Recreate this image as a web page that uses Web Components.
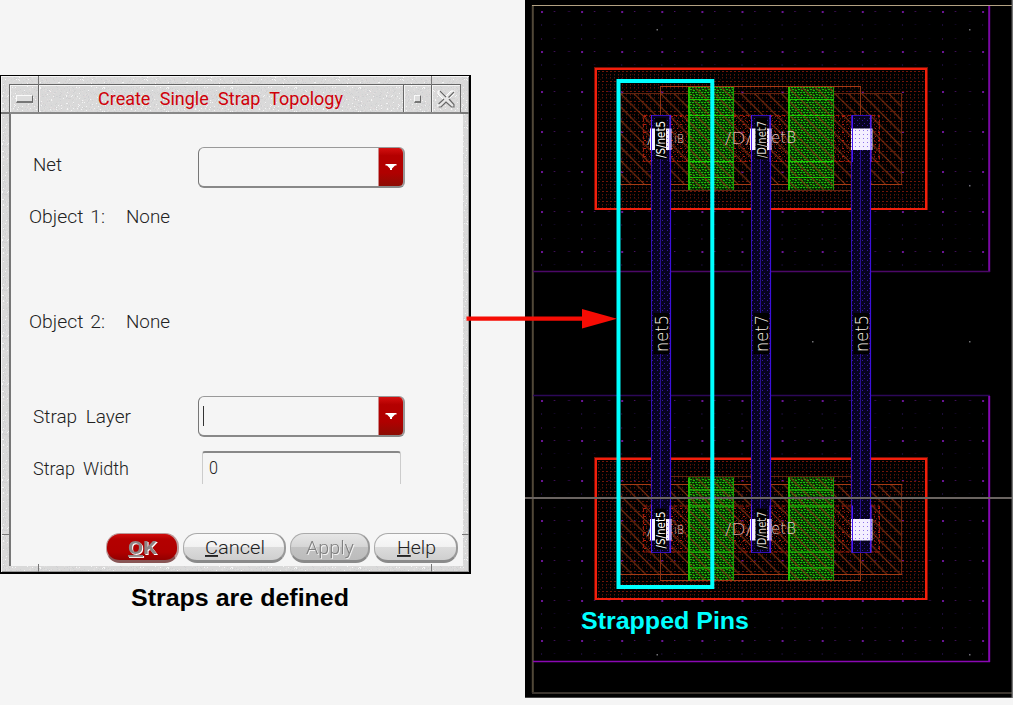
<!DOCTYPE html>
<html lang="en">
<head>
<meta charset="utf-8">
<title>Create Single Strap Topology</title>
<style>
html,body{margin:0;background:#f5f5f5;width:1013px;height:705px;overflow:hidden;font-family:Roboto,"Liberation Sans",sans-serif;color:#222}
</style>
</head>
<body>
<strap-page></strap-page>
<script>
const define = (name, cls) => customElements.define(name, cls);
class Base extends HTMLElement {
  connectedCallback() {
    if (this.shadowRoot) return;
    const t = document.createElement('template');
    t.innerHTML = this.render();
    this.attachShadow({mode: 'open'}).append(t.content.cloneNode(true));
  }
}

/* Speckled grain used by the window frame */
let seed = 7;
const rnd = () => (seed = (seed * 16807) % 2147483647) / 2147483647;
let cells = '';
for (let i = 0; i < 900; i++) {
  const c = ['#f4f4f4', '#cfcfd3', '#e2dede', '#d0d0d0', '#dcd6d7', '#d2d2d2', '#dedede'][Math.floor(rnd() * 7)];
  cells += `<rect x="${Math.floor(rnd() * 64)}" y="${Math.floor(rnd() * 48)}" width="1" height="1" fill="${c}"/>`;
}
const grain = `<svg xmlns="http://www.w3.org/2000/svg" width="64" height="48" shape-rendering="crispEdges"><rect width="64" height="48" fill="#d9d9d9"/>${cells}</svg>`;
document.documentElement.style.setProperty('--grain', `url("data:image/svg+xml,${encodeURIComponent(grain)}")`);

/* One line of text set to a fixed width; "u" underlines the first letter */
define('fit-text', class extends Base {
  render() {
    const a = (n, d) => this.getAttribute(n) || d;
    const s = a('text', ''), w = a('w'), size = a('size', 19);
    const body = this.hasAttribute('u') ? `<tspan text-decoration="underline">${s[0]}</tspan>${s.slice(1)}` : s;
    return `<style>:host{display:block;flex:none}svg{display:block;overflow:visible}text{white-space:pre;word-spacing:${a('ws', 0)}px}</style>
    <svg width="${w}" height="26"><text x="0" y="19" font-size="${size}" font-weight="${a('weight', 300)}" fill="currentColor" textLength="${w}" lengthAdjust="spacingAndGlyphs">${body}</text></svg>`;
  }
});

define('combo-box', class extends Base {
  render() {
    return `<style>
    :host{display:flex;box-sizing:border-box;width:207px;height:41px;border:1.5px solid #777;border-top-color:#999;border-right:2px solid #999;border-bottom:2px solid #888;border-radius:6px;overflow:hidden;align-items:stretch}
    .f{flex:1;display:flex;align-items:center;padding-left:4px}
    .c{width:1px;height:20px;background:#333}
    .b{width:24px;background:linear-gradient(#d41010,#b40000 20%,#b00000 65%,#8c0c04);display:flex;align-items:center;justify-content:center;border-left:1px solid #c88}
    </style><div class="f">${this.hasAttribute('caret') ? '<div class="c"></div>' : ''}</div>
    <div class="b"><svg width="12" height="8"><path d="M.5 1h11v1.500h-1.500L7 5.500V7H5V5.500L2 2.500H.5z" fill="#fff"/></svg></div>`;
  }
});

define('line-field', class extends Base {
  render() {
    return `<style>:host{display:flex;box-sizing:border-box;width:199px;height:33px;border:1px solid #ccc;border-top:2px solid #888;border-bottom:0;border-radius:3px 3px 0 0;padding:2px 0 0 6px}</style>
    <fit-text text="0" w="9"></fit-text>`;
  }
});

define('pill-button', class extends Base {
  render() {
    return `<style>
    :host{display:flex;box-sizing:border-box;height:30px;align-items:center;justify-content:center;border-radius:14px;border:1px solid #aaa;border-bottom:3px solid #8a8a8a;border-right:2px solid #999;background:linear-gradient(#fafafa,#f2f2f2 48%,#dcdcdc 50%,#cfcfcf);color:#222;padding:1px 0 0 1px}
    :host([kind=primary]){background:linear-gradient(#d00c0c,#b40000 20%,#b00000 70%,#920000);border-color:#b99;border-bottom-color:#855}
    :host([kind=primary]) fit-text{filter:drop-shadow(1.5px 1px 0 #fff);color:#8f8585}
    :host([kind=disabled]){background:linear-gradient(#e6e6e6,#d6d6d6 48%,#c2c2c2 52%,#bcbcbc);color:#808080}
    :host([kind=disabled]) fit-text{filter:drop-shadow(1px 1px 0 #f2f2f2)}
    </style><fit-text text="${this.getAttribute('label')}" w="${this.getAttribute('tw')}" ${this.hasAttribute('nou') ? '' : 'u'} ${this.getAttribute('kind') === 'primary' ? 'weight="700"' : ''}></fit-text>`;
  }
});

define('form-row', class extends Base {
  render() {
    return `<style>:host{display:flex;align-items:center;box-sizing:border-box}</style><slot></slot>`;
  }
});

define('motif-window', class extends Base {
  render() {
    return `<style>
    :host{display:flex;flex-direction:column;position:relative;box-sizing:border-box;width:471px;height:499px;border:2px solid #000;border-top-width:1px;border-left-width:1px;background:var(--grain);box-shadow:inset 1px 1px 0 #f4f4f4,inset -1px -1px 0 #999;padding:8px 6px 6px 8px}
    header{display:flex;height:30px;box-sizing:border-box;border:1px solid #666;border-bottom:2px solid #888;flex:none;margin-right:2px}
    header>div{display:flex;align-items:center;justify-content:center;box-shadow:inset 1px 1px 0 #f4f4f4}
    .min{width:28px;border-right:1px solid #666}.t{flex:1;color:#d00008;padding-right:2px}
    .max,.x{width:27px;border-left:1px solid #666}.x{width:28px}
    .min i{width:15px;height:5px;border:1px solid #fafafa;border-right:1px solid #666;border-bottom:2px solid #777;background:#ddd}
    .max i{width:5px;height:5px;border:1px solid #fafafa;border-right-color:#666;border-bottom:2px solid #777;background:#ddd}
    main{flex:1;background:#f5f5f5;border-left:2px solid #777;min-height:0}
    b{position:absolute;background:#777}
    </style>
    <header><div class="min"><i></i></div><div class="t"><fit-text text="Create Single Strap Topology" w="245" size="18.5" ws="5" weight="400"></fit-text></div>
    <div class="max"><i></i></div><div class="x"><svg width="18" height="18" fill="none"><path d="M1 1h3l5 5 5-5h3v3l-5 5 5 5v3h-3l-5-5-5 5H1v-3l5-5-5-5z" fill="#e6e6e6" stroke="#fff"/><path d="M3 1l6 6M17 2l-5.500 5.500M12 9l5 5.500v2.500h-2.500L9 12l-5 5H1.500M1.500 14L7 9" stroke="#666" stroke-width="1.200"/></svg></div></header>
    <main><slot></slot></main>
    <b style="left:37px;top:0;width:1px;height:9px"></b><b style="left:430px;top:0;width:1px;height:9px"></b>
    <b style="left:0;top:36px;width:9px;height:2px"></b><b style="right:0;top:36px;width:8px;height:2px"></b>
    <b style="left:1px;top:458px;width:8px;height:1px"></b><b style="right:0;top:458px;width:7px;height:1px"></b>
    <b style="left:37px;bottom:0;width:1px;height:8px"></b><b style="left:430px;bottom:0;width:1px;height:8px"></b>`;
  }
});

/* Chip layout drawing; the viewBox starts at x=525 so it shares the page's x axis */
define('chip-layout', class extends Base {
  render() {
    const R = (x1, y1, x2, y2, st, f = 'none', w = 1, extra = '') =>
      `<rect x="${x1}" y="${y1}" width="${x2 - x1}" height="${y2 - y1}" fill="${f}" stroke="${st}" stroke-width="${w}" ${extra}/>`;
    const H = (x1, x2, y, c, w = 1, e = '') => `<path d="M${x1} ${y}H${x2}" stroke="${c}" stroke-width="${w}" ${e}/>`;
    const V = (x, y1, y2, c, w = 1, e = '') => `<path d="M${x} ${y1}V${y2}" stroke="${c}" stroke-width="${w}" ${e}/>`;
    const T = (x, y, s, w, size, c, rot, wt = 200) =>
      `<text transform="translate(${x} ${y})${rot ? ' rotate(-90)' : ''}" font-size="${size}" font-weight="${wt}" fill="${c}" textLength="${w}" lengthAdjust="spacingAndGlyphs">${s}</text>`;
    const device = (d, up) => {
      const dim = '#5e2410', lit = '#a43a14';
      const a = up ? dim : lit, b = up ? lit : dim;
      const y = up ? [93.5, 184.5, 86.5, 190.5] : [484.5, 574.5, 476.5, 580.5];
      let s = R(596, 69 + d, 926, 209 + d, 'none', 'url(#redDots)');
      s += R(620, y[0], 902, y[1], 'none', 'url(#hatch)');
      s += V(620.5, y[0], y[1], '#6a2810') + V(901.5, y[0], y[1], '#6a2810') + H(620, 902, y[0], a) + H(620, 902, y[1], lit);
      s += V(660.5, y[2], y[3], '#8a3412') + V(860.5, y[2], y[3], '#8a3412') + H(660, 861, y[2], b) + H(660, 861, y[3], a);
      s += R(643, 115 + d, 880, 162 + d, 'none', 'url(#viaDots)');
      s += R(643.5, 115.5 + d, 879.5, 161.5 + d, '#9c1a08', 'none', 1, 'stroke-dasharray="4 2"');
      for (const x of [688, 788]) {
        s += R(x, 87 + d, x + 46, 189.5 + d, 'none', '#094004') + R(x, 87 + d, x + 46, 189.5 + d, 'none', 'url(#green)') + R(x, 87 + d, x + 46, 189.5 + d, 'none', 'url(#hatch)', 1, 'opacity=".9"');
        s += V(x + 1, 87 + d, 190 + d, '#22e000', 1.5) + V(x + 45.5, 87 + d, 190 + d, '#1a9c08');
        for (const q of [99.5, 115.5, 161.5, 177.5]) s += H(x, x + 46, q + d, '#1fc604');
      }
      const e = Math.floor(d);
      s += R(594.5, 67.5 + e, 927.5, 209.5 + e, '#7d0f05') + R(596, 69 + e, 926, 209 + e, '#f21f0c', 'none', 2);
      return s;
    };
    const labels = d => {
      let s = T(647, 144 + d, '/', 6, 15, '#d0c0c0') + T(674, 143 + d, 'iB', 10, 12, '#e0c4c0') + T(725, 144 + d, '/D/', 27, 16, '#dca8a4') + T(771, 143 + d, 'etB', 25, 15, '#ecccc8');
      for (const x of [650, 750, 851]) {
        s += R(x, 128.5 + d, x + 21.5, 150 + d, 'none', '#f4efff') + R(x, 128.5 + d, x + 21.5, 150 + d, 'none', 'url(#padDots)');
        s += V(x + 1.5, 115 + d, 162 + d, '#4a18f0') + V(x + 20, 115 + d, 162 + d, '#5a2cff');
      }
      s += R(655, 118 + d, 666, 159 + d, 'none', '#000') + R(755.5, 118 + d, 767, 159 + d, 'none', '#000');
      s += T(665, 158 + d, '/S/net5', 37, 12.5, '#fff', 1, 400) + T(765.5, 158 + d, '/D/net7', 37, 12.5, '#ddd6d2', 1, 400);
      return s;
    };
    const dots = (id, ox, oy) => {
      let c = '';
      [0, 13, 27].forEach((x, i) => [0, 13, 27].forEach((y, j) => {
        const col = j === 0 ? (i === 2 ? '#30084c' : '#6a1494') : (i === 2 ? '#0a0520' : j === 1 ? '#1a0c38' : '#2c0c40');
        c += `<rect x="${x}" y="${y}" width="${j === 0 && i !== 1 ? 2 : 1}" height="${i ? 1 : 2}" fill="${col}"/>`;
      }));
      return `<pattern id="${id}" x="${ox}" y="${oy}" width="40.1" height="40" patternUnits="userSpaceOnUse">${c}</pattern>`;
    };
    let s = R(533, 6, 989, 271, 'none', 'url(#g1)') + R(533, 396, 989, 661, 'none', 'url(#g2)');
    s += V(532.8, 5, 693, '#514838', 2) + H(532, 1013, 5.5, '#b3a283') + H(532, 1013, 693, '#3c3630', 2);
    s += V(989.2, 6, 272, '#7a08a4', 2) + H(533, 990, 271.5, '#4c0868', 1.5) + H(533, 990, 395.5, '#2c0858', 1.5) + V(989.2, 396, 662, '#8608b4', 2) + H(533, 990, 661.5, '#8a08b4', 1.5);
    s += `<g>${device(0, true)}${device(390.5, false)}</g>`;
    for (const x of [651.5, 751.5, 851.5]) {
      s += R(x, 115.5, x + 19, 552.5, '#3410b8', 'url(#blue)') + V(x + 9, 150, 552, '#280e90');
      s += V(x + 19, 115, 553, '#3c10dc', 1.2);
    }
    s += labels(0) + labels(390.5);
    [['net5', 654], ['net7', 754], ['net5', 854]].forEach(([t, x]) => s += R(x - .5, 313, x + 15, 354, 'none', '#000') + T(x + 14, 352, t, 37, 17, '#fff6ee', 1));
    for (const [x, y] of [[656.5, 29], [969, 29], [969, 185], [656.5, 654], [969, 654], [812, 341], [969, 341]]) s += `<rect x="${x}" y="${y}" width="1.5" height="1.5" fill="#707074"/>`;
    s += H(525, 1013, 498, '#6a6461', 2) + V(1012.3, 0, 698, '#777', 1.4) + H(525, 1013, 698, '#888', 1);
    s += R(618.5, 81, 712.3, 587, '#00ffff', 'none', 4);
    s += `<text class="cap" x="581" y="629" font-size="24" textLength="168" lengthAdjust="spacingAndGlyphs">Strapped Pins</text>`;
    return `<style>:host{display:block;width:488px;height:698px;background:#000}svg{display:block}text{font-family:"DejaVu Sans",sans-serif}.cap{font-family:"Liberation Sans",sans-serif;font-weight:700;fill:#0ff}</style>
    <svg width="488" height="698" viewBox="525 0 488 698"><defs>
    ${dots('g1', 541, 11)}${dots('g2', 541, 400)}
    <pattern id="redDots" x="597" y="71" width="12" height="10" patternUnits="userSpaceOnUse"><path d="M1 .5h2M5 .5h2M9 .5h2" stroke="#701608"/><path d="M1 3.5h1M5 3.5h1M9 3.5h1M1 6.5h1M5 6.5h1M9 6.5h1" stroke="#5a1408"/><path d="M1 4.5h1M5 4.5h1M9 4.5h1M1 7.5h1M5 7.5h1M9 7.5h1M3 8.5h1M11 3.5h1" stroke="#300a04"/></pattern>
    <pattern id="hatch" x="620" y="93" width="13.4" height="13.4" patternUnits="userSpaceOnUse"><path d="M-2 -2L16 16M-2 11.4L2 15.4M11.4 -2L15.4 2" stroke="#86320f" stroke-width="1"/></pattern>
    <pattern id="viaDots" x="644" y="116" width="9" height="8" patternUnits="userSpaceOnUse"><path d="M0 .5h2M6 4.5h1" stroke="#b41c10"/><path d="M5 .5h1M2 4.5h1" stroke="#8c180c"/><path d="M2 2.5h1M7 2.5h1M0 6.5h1M4 6.5h1" stroke="#5c1208"/></pattern>
    <pattern id="green" x="689" y="87" width="6" height="5" patternUnits="userSpaceOnUse"><path d="M0 .5h2M3 .5h2M1 2.5h2M4 3.5h2" stroke="#1cb808"/><path d="M2 1.5h1M5 1.5h1M0 3.5h1M3 4.5h1" stroke="#021400"/><path d="M4 2.5h1" stroke="#7a2c08"/></pattern>
    <pattern id="blue" x="651" y="115" width="5" height="5" patternUnits="userSpaceOnUse"><rect width="5" height="5" fill="#070320"/><path d="M1 .5h1M3 3.5h1" stroke="#34189c"/></pattern>
    <pattern id="padDots" x="650" y="128" width="4" height="4" patternUnits="userSpaceOnUse"><rect x="1" y="2" width="1" height="1" fill="#8d74e8"/></pattern>
    </defs><g>${s}</g></svg>`;
  }
});

define('strap-arrow', class extends Base {
  render() {
    return `<style>:host{display:block;position:absolute;left:466px;top:308px}svg{display:block}</style>
    <svg width="152" height="22"><path d="M.5 10.7H118" stroke="#f60c04" stroke-width="4.2"/><path d="M116 1L151 10.7 116 20.5z" fill="#f60c04"/></svg>`;
  }
});

define('strap-page', class extends Base {
  render() {
    return `<style>
    :host{display:flex;position:relative;width:1013px;height:705px}
    .left{width:525px;padding-top:75px;box-sizing:border-box}
    .cap{color:#000;font-family:"Liberation Sans",sans-serif;padding:13px 0 0 131px}
    .btns{display:flex;gap:4px;padding-left:95px}
    form-row{padding-left:22px}
    combo-box,line-field{margin-left:1px}
    </style>
    <div class="left"><motif-window>
      <form-row style="height:41px;margin-top:33px"><fit-text style="width:164px;margin-bottom:5px" text="Net" w="29"></fit-text><combo-box></combo-box></form-row>
      <form-row style="height:58px;padding-left:18px"><fit-text style="width:97px" text="Object 1:" w="76" ws="2"></fit-text><fit-text text="None" w="44"></fit-text></form-row>
      <form-row style="height:58px;padding-left:18px;margin-top:47px"><fit-text style="width:97px" text="Object 2:" w="76" ws="2"></fit-text><fit-text text="None" w="44"></fit-text></form-row>
      <form-row style="height:41px;margin-top:45px"><fit-text style="width:164px;margin-top:1px" text="Strap Layer" w="98" ws="4"></fit-text><combo-box caret></combo-box></form-row>
      <form-row style="height:33px;margin-top:14px"><fit-text style="width:168px;margin-top:3px" text="Strap Width" w="96" ws="4"></fit-text><line-field></line-field></form-row>
      <div class="btns" style="margin-top:49px">
        <pill-button kind="primary" label="OK" tw="29" style="width:73px"></pill-button>
        <pill-button label="Cancel" tw="60" style="width:103px"></pill-button>
        <pill-button kind="disabled" nou label="Apply" tw="48" style="width:80px"></pill-button>
        <pill-button label="Help" tw="39" style="width:84px"></pill-button>
      </div>
    </motif-window>
    <div class="cap"><fit-text text="Straps are defined" w="218" size="24" weight="700"></fit-text></div></div>
    <chip-layout></chip-layout>
    <strap-arrow></strap-arrow>`;
  }
});
</script>
</body>
</html>
